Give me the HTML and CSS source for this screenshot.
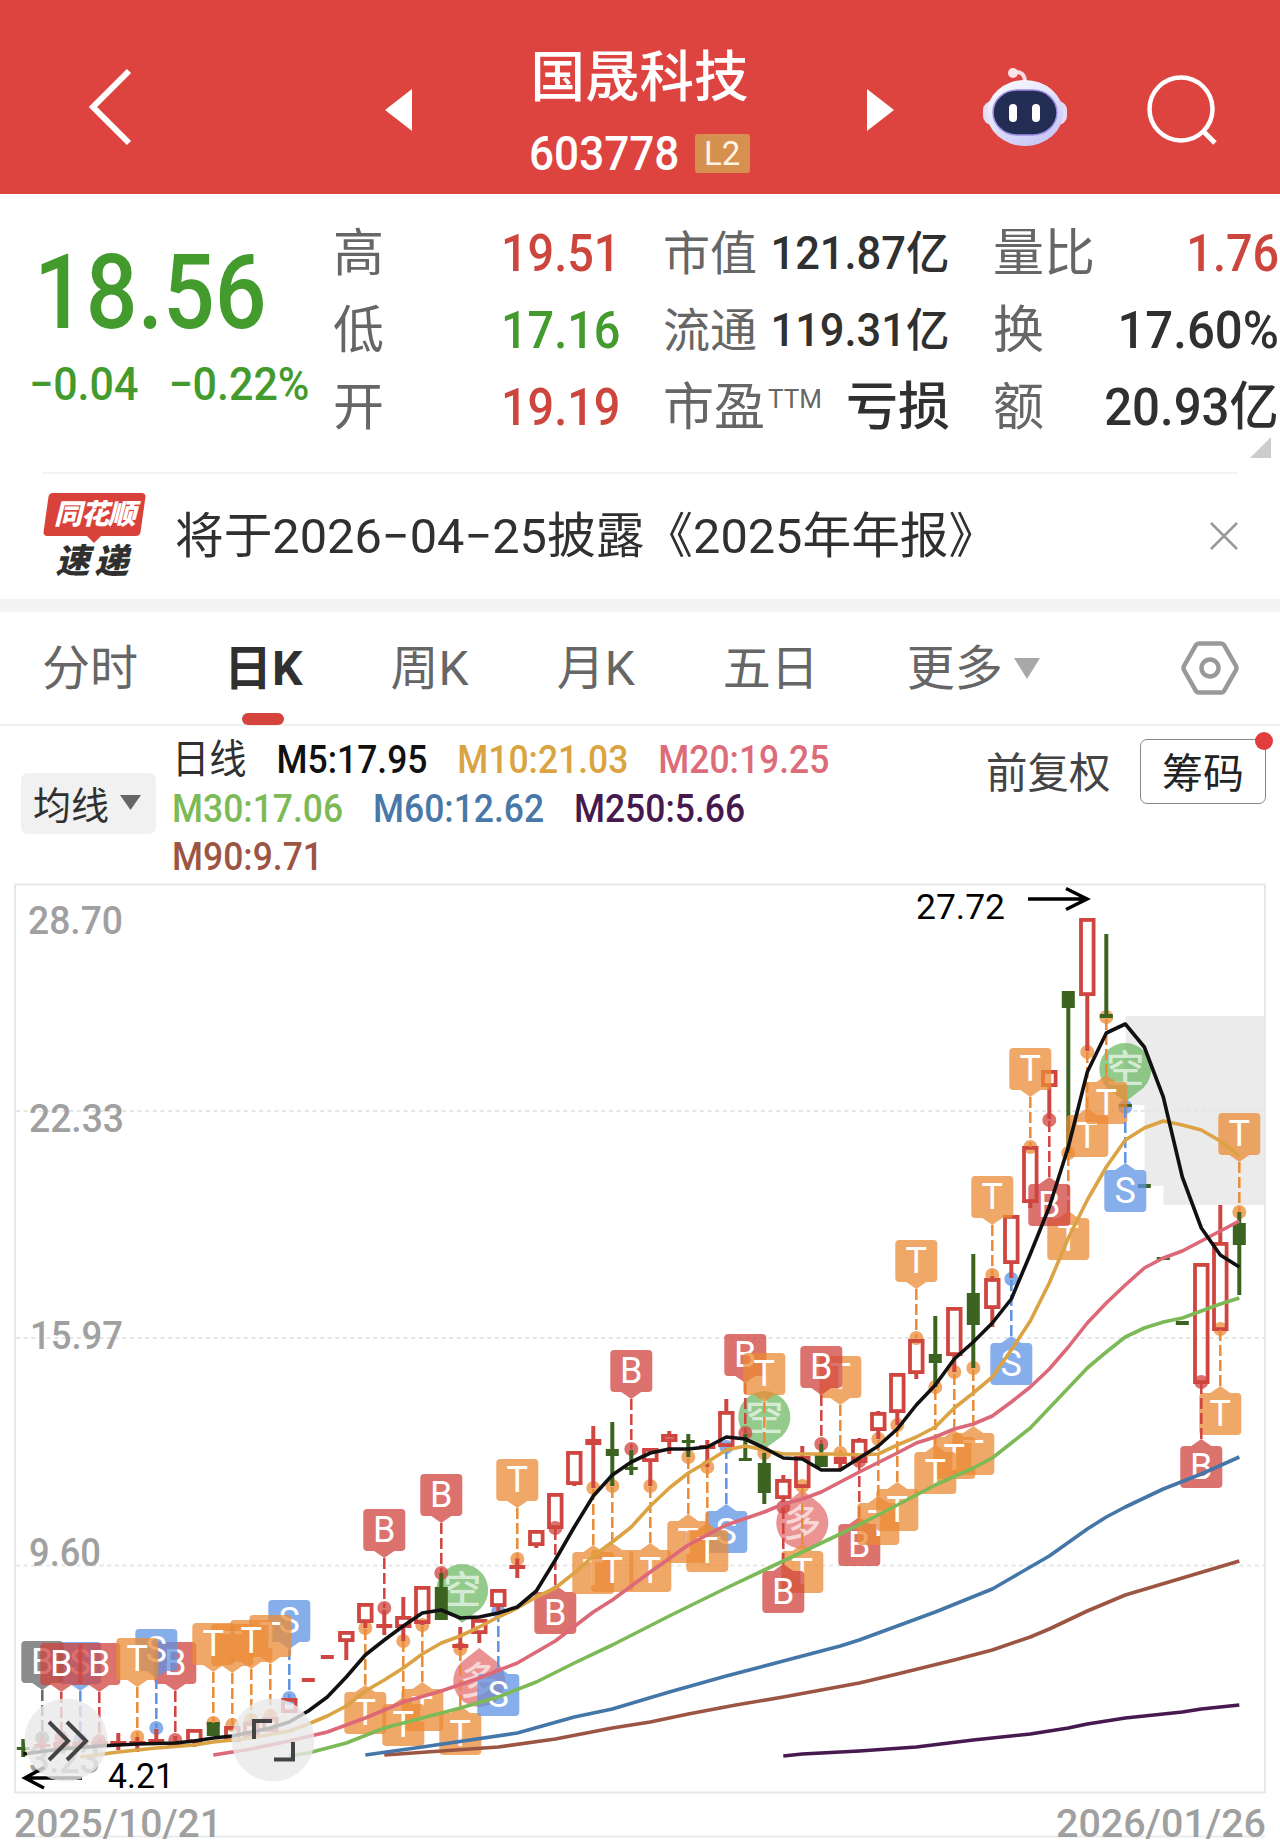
FILE: index.html
```
<!DOCTYPE html>
<html lang="zh-CN">

<head>
    <meta charset="UTF-8" />
    <meta name="viewport" content="width=device-width, initial-scale=1.0" />
    <title>国晟科技 603778</title>
    <link rel="stylesheet" href="styles.css">
</head>

<body>
    <header class="topbar">
        <svg class="back" width="46" height="82" viewBox="0 0 46 82">
            <path d="M42 5 L6 41 L42 77" fill="none" stroke="#fff" stroke-width="6" />
        </svg>
        <svg class="prev" width="27" height="42" viewBox="0 0 27 42">
            <path d="M27 0 V42 L0 21 Z" fill="#fff" />
        </svg>
        <div class="stock">
            <h1>国晟科技</h1>
            <div class="code"><span class="digits">603778</span><span class="level">L2</span></div>
        </div>
        <svg class="next" width="27" height="42" viewBox="0 0 27 42">
            <path d="M0 0 V42 L27 21 Z" fill="#fff" />
        </svg>
        <svg class="robot" width="86" height="82" viewBox="0 0 86 82">
            <defs>
                <linearGradient id="shell" x1="0" y1="0" x2="0.6" y2="1">
                    <stop offset="0" stop-color="#fff" />
                    <stop offset="1" stop-color="#c9c8f6" />
                </linearGradient>
            </defs>
            <path d="M31 7 Q43 5 43 18" fill="none" stroke="#f4d9e6" stroke-width="4" />
            <circle cx="31" cy="8" r="5" fill="#fbe3ea" />
            <rect x="1" y="36" width="84" height="24" rx="9" fill="#e6dcf6" />
            <ellipse cx="43" cy="48" rx="38" ry="33" fill="url(#shell)" />
            <rect x="11" y="25" width="64" height="45" rx="24" fill="#232c53" stroke="#9c8fe6" stroke-width="1.5" />
            <rect x="27" y="39" width="8" height="18" rx="4" fill="#fff" />
            <rect x="50" y="39" width="8" height="18" rx="4" fill="#fff" />
        </svg>
        <svg class="search" width="76" height="76" viewBox="0 0 76 76">
            <circle cx="36" cy="36" r="31.5" fill="none" stroke="#fff" stroke-width="4.5" />
            <path d="M58 58 L70 70" stroke="#fff" stroke-width="5" />
        </svg>
    </header>

    <section class="quote">
        <div class="price down">
            <div class="now">18.56</div>
            <div class="change"><span>−0.04</span><span>−0.22%</span></div>
        </div>
        <div class="col col-a">
            <div><label>高</label><b class="up">19.51</b></div>
            <div><label>低</label><b class="down">17.16</b></div>
            <div><label>开</label><b class="up">19.19</b></div>
        </div>
        <div class="col col-b">
            <div class="tight"><label>市值</label><b>121.87亿</b></div>
            <div class="tight"><label>流通</label><b>119.31亿</b></div>
            <div><label>市盈<small>TTM</small></label><b class="word">亏损</b></div>
        </div>
        <div class="col col-c">
            <div><label>量比</label><b class="up">1.76</b></div>
            <div><label>换</label><b>17.60%</b></div>
            <div><label>额</label><b>20.93亿</b></div>
        </div>
        <i class="corner"></i>
    </section>

    <section class="notice">
        <div class="logo">
            <span class="logo-top">同花顺</span>
            <span class="logo-bottom">速递</span>
        </div>
        <p>将于2026−04−25披露《2025年年报》</p>
        <svg class="close" width="28" height="28" viewBox="0 0 28 28">
            <path d="M1 1 L27 27 M27 1 L1 27" stroke="#999" stroke-width="2.6" />
        </svg>
    </section>

    <nav class="tabs">
        <a>分时</a>
        <a class="active">日K</a>
        <a>周K</a>
        <a>月K</a>
        <a>五日</a>
        <a>更多<svg width="26" height="21" viewBox="0 0 26 21"><path d="M0 0 H26 L13 21 Z" fill="#a8a8a8" /></svg></a>
        <svg class="setting" width="58" height="54" viewBox="0 0 58 54">
            <path d="M18 2.500 H40 Q42 2.500 43 4 L55 25 Q56 27 55 29 L43 50 Q42 51.500 40 51.500 H18 Q16 51.500 15 50 L3 29 Q2 27 3 25 L15 4 Q16 2.500 18 2.500 Z" fill="none" stroke="#999" stroke-width="4.500" />
            <circle cx="29" cy="27" r="8.500" fill="none" stroke="#999" stroke-width="4.500" />
        </svg>
    </nav>

    <section class="average">
        <button class="pick">均线<svg width="21" height="15" viewBox="0 0 21 15"><path d="M0 0 H21 L10.500 15 Z" fill="#666" /></svg></button>
        <div class="lines">
            <div><span class="name">日线</span><span class="m5">M5:17.95</span><span class="m10">M10:21.03</span><span class="m20">M20:19.25</span></div>
            <div><span class="m30">M30:17.06</span><span class="m60">M60:12.62</span><span class="m250">M250:5.66</span></div>
            <div><span class="m90">M90:9.71</span></div>
        </div>
        <span class="adjust">前复权</span>
        <button class="chips">筹码<i></i></button>
    </section>

    <svg id="chart" width="1280" height="967" viewBox="0 880 1280 967"></svg>

    <script src="chart.js"></script>
</body>

</html>
```
FILE: styles.css
```
* {
    box-sizing: border-box;
}

body {
    margin: 0;
    width: 1280px;
    height: 1847px;
    overflow: hidden;
    background: #fff;
    color: #303030;
    font-family: Roboto, "Noto Sans CJK SC", sans-serif;
}

svg {
    display: block;
    flex: none;
}

/* top bar */
.topbar {
    display: flex;
    height: 194px;
    background: #dd433f;
    color: #fff;
}

.back {
    margin: 66px 0 0 87px;
}

.prev {
    margin: 89px 0 0 252px;
}

.stock {
    width: 455px;
    padding-top: 41px;
    text-align: center;
}

.stock h1 {
    margin: 0;
    font-size: 54.500px;
    font-weight: 500;
    line-height: 72px;
}

.code {
    display: flex;
    justify-content: center;
    align-items: center;
    gap: 14px;
    height: 80px;
    font-size: 49px;
    font-weight: 500;
}

/* the digits are narrower than the font draws them */
.digits {
    margin-right: -16px;
    transform: scaleX(.9);
    transform-origin: left;
}

.level {
    width: 55px;
    height: 39px;
    border-radius: 3px;
    background: #d69150;
    color: #fff4e2;
    font-size: 33px;
    font-weight: 400;
    line-height: 40px;
}

.next {
    margin: 89px 0 0;
}

.robot {
    margin: 65px 0 0 88px;
}

.search {
    margin: 73px 0 0 77px;
}

/* quote */
.quote {
    position: relative;
    display: flex;
    height: 280px;
    padding-top: 21px;
}

.quote::after {
    content: "";
    position: absolute;
    left: 42px;
    right: 42px;
    bottom: 0;
    height: 2px;
    background: #f4f4f4;
}

.up {
    color: #cd463e;
}

.down {
    color: #439a2d;
}

.price {
    width: 333px;
}

.now {
    margin: 20px 0 0 34px;
    font-size: 104px;
    font-weight: 500;
    line-height: 116px;
    transform: scaleX(.877);
    transform-origin: left;
}

.change {
    display: flex;
    gap: 32px;
    padding-left: 31px;
    font-size: 46px;
    font-weight: 500;
    line-height: 66px;
    white-space: nowrap;
    transform: scaleX(.935);
    transform-origin: left;
}

.col div {
    display: flex;
    align-items: center;
    justify-content: space-between;
    height: 77px;
    white-space: nowrap;
}

.col label {
    color: #666;
    font-size: 51px;
    line-height: 77px;
}

.col b {
    font-size: 52px;
    font-weight: 500;
    line-height: 77px;
    transform: scaleX(.945);
    transform-origin: right;
}

.col-a {
    width: 330px;
}

.col-a label {
    width: 168px;
}

.col-a div {
    justify-content: flex-start;
}

.col-a b {
    transform: scaleX(.9);
    transform-origin: left;
}

.col-b {
    width: 287px;
}

.col-b .tight label {
    font-size: 47px;
}

.col-b .tight b {
    font-size: 46px;
}

.col-b .word {
    transform: none;
}

.col-b small {
    padding-left: 3px;
    font-size: 26px;
    vertical-align: 17px;
    line-height: 1;
}

.col-c {
    width: 286px;
    margin-left: 43px;
}

.col-c .up {
    transform: scaleX(.9);
}

.corner {
    position: absolute;
    right: 9px;
    top: 243px;
    border-left: 21px solid transparent;
    border-bottom: 21px solid #ccc;
}

/* notice */
.notice {
    display: flex;
    height: 138px;
    border-bottom: 13px solid #f4f4f4;
}

.logo {
    width: 103px;
    margin: 19px 0 0 43px;
    text-align: center;
}

.logo-top {
    display: block;
    position: relative;
    height: 43px;
    font-size: 28px;
    font-weight: 900;
    line-height: 43px;
    color: #fff;
    z-index: 0;
    font-style: italic;
    letter-spacing: -1px;
}

.logo-top::before {
    content: "";
    position: absolute;
    inset: 0 3px;
    border-radius: 4px;
    background: #d8423b;
    transform: skewX(-8deg);
    z-index: -1;
}

.logo-top::after {
    content: "";
    position: absolute;
    left: 44px;
    top: 43px;
    border: 7px solid transparent;
    border-top-color: #d8423b;
}

.logo-bottom {
    display: block;
    margin: 7px 0 0 0;
    font-size: 34px;
    font-weight: 900;
    font-style: italic;
    line-height: 36px;
    letter-spacing: 5px;
}

.notice p {
    width: 1064px;
    margin: 0;
    padding-left: 29px;
    font-size: 48.700px;
    line-height: 126px;
    white-space: nowrap;
}

.close {
    margin: 48px 0 0;
}

/* tabs */
.tabs {
    position: relative;
    display: flex;
    height: 114px;
    border-bottom: 2px solid #efefef;
    color: #666;
    font-size: 48px;
    line-height: 116px;
}

.tabs a {
    position: relative;
    display: flex;
    align-items: center;
    height: 113px;
    white-space: nowrap;
    margin-left: 88px;
}

.tabs a:first-child {
    margin-left: 42px;
}

.tabs a svg {
    margin-left: 11px;
}

.tabs .active {
    margin-left: 86px;
    color: #303030;
    font-weight: 700;
}

.tabs .active::after {
    content: "";
    position: absolute;
    left: 18px;
    bottom: 0;
    width: 42px;
    height: 12px;
    border-radius: 6px;
    background: #d4443c;
}

.setting {
    margin: 29px 41px 0 auto;
}

/* moving averages */
.average {
    display: flex;
    height: 154px;
}

.pick {
    display: flex;
    align-items: center;
    justify-content: center;
    gap: 11px;
    width: 135px;
    height: 61px;
    margin: 47px 0 0 21px;
    padding: 0 3px 3px 0;
    border: none;
    border-radius: 7px;
    background: #f1f1f1;
    color: #303030;
    font: 400 38px Roboto, "Noto Sans CJK SC", sans-serif;
}

.lines {
    width: 831px;
    padding: 10px 0 0 16px;
    font-size: 38px;
    font-weight: 500;
    white-space: nowrap;
}

.lines div {
    display: flex;
    gap: 32px;
    height: 48.500px;
    line-height: 48.500px;
    transform: scaleX(.933);
    transform-origin: left;
}

.name {
    font-size: 40px;
    font-weight: 400;
}

.m5 {
    color: #111;
}

.m10 {
    color: #d9a441;
}

.m20 {
    color: #dc6c79;
}

.m30 {
    color: #7dba57;
}

.m60 {
    color: #4878a8;
}

.m250 {
    color: #46194f;
}

.m90 {
    color: #9c5543;
}

.adjust {
    width: 154px;
    margin-left: -1px;
    font-size: 41.500px;
    line-height: 96px;
    color: #444;
}

.chips {
    position: relative;
    width: 126px;
    height: 65px;
    margin-top: 13px;
    padding: 0 0 3px;
    border: 1.500px solid #888;
    border-radius: 7px;
    background: #fff;
    color: #222;
    font: 400 41px Roboto, "Noto Sans CJK SC", sans-serif;
}

.chips i {
    position: absolute;
    right: -8px;
    top: -8px;
    width: 18px;
    height: 18px;
    border-radius: 50%;
    background: #e23c3c;
}

/* chart */
#chart text {
    font-family: Roboto, "Noto Sans CJK SC", sans-serif;
}

#chart .axis {
    fill: #a0a0a0;
    font-size: 39px;
    font-weight: 500;
}

#chart .extreme {
    fill: #000;
    font-size: 35px;
}

#chart .letter {
    fill: #fff;
    font-size: 36px;
    text-anchor: middle;
}

#chart .pin {
    fill: #fff;
    fill-opacity: .65;
    font-size: 38px;
    font-weight: 500;
    text-anchor: middle;
}
```
FILE: chart.js
```
const RED = "#cf4640";
const GREEN = "#3c6420";
const TAG = { B: "#d0433e", T: "#eb8b36", S: "#5e93e3", G: "#666666" };

const x = i => 23.3 + 19 * i;

// index, colour, high, body top, body bottom, low
const candles = [
    [0, "g", 1739, 1747, 1750, 1757], [1, "r", 1738, 1744, 1747, 1750], [2, "r", 1739, 1742, 1748, 1750],
    [3, "r", 1738, 1742, 1746, 1749], [4, "r", 1738, 1741, 1745, 1748], [5, "r", 1733, 1741, 1744, 1750],
    [6, "r", 1737, 1741, 1745, 1752], [7, "r", 1729, 1739, 1743, 1745], [8, "r", 1736, 1744, 1747, 1748],
    [9, "r", 1729, 1729, 1743, 1747], [10, "g", 1722, 1722, 1736, 1736], [11, "r", 1726, 1726, 1742, 1742],
    [12, "r", 1720, 1722, 1737, 1737], [13, "r", 1717, 1717, 1732, 1732], [14, "r", 1698, 1698, 1713, 1713],
    [15, "r", 1678, 1678, 1682, 1682], [16, "r", 1655, 1655, 1659, 1659], [17, "r", 1631, 1631, 1642, 1660],
    [18, "r", 1603, 1603, 1623, 1628], [19, "r", 1610, 1624, 1628, 1635], [20, "r", 1597, 1616, 1628, 1641],
    [21, "r", 1586, 1586, 1624, 1625], [22, "g", 1573, 1587, 1620, 1620], [23, "r", 1627, 1644, 1648, 1650],
    [24, "r", 1619, 1619, 1634, 1643], [25, "r", 1589, 1589, 1607, 1611], [26, "r", 1558, 1565, 1569, 1578],
    [27, "r", 1530, 1530, 1546, 1548], [28, "r", 1493, 1493, 1529, 1529], [29, "r", 1451, 1451, 1485, 1486],
    [30, "r", 1426, 1439, 1445, 1488], [31, "g", 1422, 1449, 1456, 1486], [32, "g", 1450, 1467, 1470, 1475],
    [33, "r", 1448, 1448, 1462, 1486], [34, "r", 1431, 1434, 1442, 1454], [35, "g", 1434, 1440, 1443, 1457],
    [36, "r", 1440, 1445, 1449, 1467], [37, "r", 1399, 1411, 1447, 1447], [38, "g", 1434, 1458, 1461, 1461],
    [39, "g", 1453, 1463, 1493, 1504], [40, "r", 1475, 1479, 1499, 1506], [41, "r", 1446, 1456, 1488, 1488],
    [42, "g", 1444, 1453, 1467, 1467], [43, "r", 1457, 1457, 1464, 1469], [44, "r", 1438, 1439, 1463, 1463],
    [45, "r", 1411, 1412, 1431, 1439], [46, "r", 1373, 1373, 1413, 1425], [47, "r", 1339, 1339, 1374, 1379],
    [48, "g", 1316, 1354, 1363, 1387], [49, "r", 1307, 1307, 1356, 1372], [50, "g", 1254, 1293, 1325, 1368],
    [51, "r", 1276, 1278, 1309, 1327], [52, "r", 1215, 1215, 1264, 1278], [53, "r", 1146, 1146, 1203, 1208],
    [54, "r", 1070, 1070, 1087, 1119], [55, "g", 991, 991, 1008, 1153], [56, "r", 918, 918, 996, 1051],
    [57, "g", 934, 1014, 1018, 1018], [58, "g", 1104, 1104, 1107, 1107], [59, "g", 1184, 1184, 1188, 1188],
    [60, "g", 1257, 1257, 1260, 1260], [61, "g", 1321, 1321, 1325, 1325], [62, "r", 1263, 1263, 1384, 1384],
    [63, "r", 1205, 1242, 1331, 1331], [64, "g", 1212, 1223, 1245, 1295]
];

// index, letter, box top, dot y -- later ones lie on top
const tags = [
    [3, "S", 1642, 1740], [1, "G", 1641, 1738], [4, "B", 1643, 1741], [2, "B", 1643, 1738],
    [8, "B", 1642, 1740], [7, "S", 1629, 1728], [6, "T", 1638, 1737],
    [14, "S", 1600, 1698], [13, "T", 1615, 1716], [11, "T", 1624, 1725], [12, "T", 1620, 1720], [10, "T", 1623, 1723],
    [18, "T", 1692, 1628], [19, "B", 1509, 1608], [21, "T", 1689, 1625], [20, "T", 1704, 1641],
    [22, "B", 1474, 1573], [23, "T", 1713, 1649], [25, "S", 1674, 1611], [26, "T", 1459, 1559],
    [28, "B", 1592, 1528], [30, "T", 1552, 1488], [33, "T", 1550, 1486], [31, "T", 1550, 1486],
    [32, "B", 1350, 1449], [37, "S", 1511, 1447], [35, "T", 1521, 1457], [36, "T", 1530, 1467],
    [38, "B", 1334, 1433], [39, "T", 1353, 1453], [41, "T", 1551, 1486], [40, "B", 1571, 1507],
    [43, "T", 1356, 1453], [42, "B", 1346, 1444], [44, "B", 1524, 1461], [45, "T", 1503, 1439],
    [46, "T", 1489, 1425], [50, "T", 1433, 1368], [49, "T", 1437, 1372], [48, "T", 1452, 1387],
    [47, "T", 1240, 1338], [51, "T", 1176, 1275], [52, "S", 1343, 1279], [53, "T", 1048, 1147],
    [55, "T", 1218, 1153], [54, "B", 1184, 1120], [56, "T", 1115, 1052], [57, "T", 1082, 1017],
    [58, "S", 1170, 1107], [63, "T", 1393, 1329], [62, "B", 1446, 1382], [64, "T", 1113, 1212]
];

// long / short signals: index, text, centre y, tip y
const pins = [
    [23.1, "空", 1590, 1623], [39, "空", 1417, 1449], [58, "空", 1069, 1102],
    [24, "多", 1681, 1648], [41, "多", 1523, 1490]
];

// moving averages: colour, then index / y pairs
const averages = [
    ["#46194f", [40, 1756, 41, 1754, 44, 1751, 47, 1747, 50, 1740, 53, 1734, 55, 1728, 56, 1724, 58, 1718, 61, 1712, 62, 1709, 64, 1705]],
    ["#9c5543", [19, 1755, 25, 1747, 28, 1739, 31, 1728, 33, 1722, 35, 1714, 37.5, 1705, 40, 1697, 42, 1690, 44, 1683, 46, 1674, 49, 1660, 51, 1650, 53, 1637, 54, 1629, 56, 1611, 58, 1595, 61, 1578, 64, 1561]],
    ["#4477a8", [18, 1755, 21, 1747, 26, 1733, 29, 1717, 31, 1709, 34, 1692, 37, 1676, 40, 1661, 43, 1646, 44, 1640, 46, 1626, 48, 1612, 51, 1589, 52, 1578, 54, 1556, 56, 1529, 57, 1517, 58, 1507, 60, 1489, 62, 1474, 64, 1457]],
    ["#7dba57", [14, 1756, 15, 1753, 17, 1743, 19, 1728, 21, 1718, 23, 1708, 25, 1697, 27, 1682, 29, 1663, 31, 1645, 34, 1616, 37, 1588, 39, 1570, 41, 1552, 43, 1534, 45, 1515, 47, 1495, 48, 1485, 50, 1468, 51, 1458, 52, 1443, 53, 1428, 54, 1408, 55, 1388, 56, 1368, 57, 1352, 58, 1337, 59, 1328, 60, 1322, 61, 1318, 62, 1311, 63, 1304, 64, 1298]],
    ["#dc6878", [10, 1755, 12, 1749, 14, 1741, 16, 1732, 18, 1718, 20, 1702, 22, 1691, 24, 1678, 26, 1663, 28, 1641, 30, 1612, 31, 1600, 33, 1572, 35, 1545, 37, 1525, 39, 1512, 40, 1504, 41, 1499, 42, 1492, 44, 1472, 46, 1453, 47, 1443, 48, 1437, 49, 1429, 50, 1424, 51, 1416, 52, 1402, 53, 1387, 54, 1369, 55, 1347, 56, 1323, 57, 1303, 58, 1285, 59, 1268, 60, 1258, 61, 1251, 62, 1241, 63, 1231, 64, 1221]],
    ["#dba343", [3, 1757, 5, 1752, 7, 1748, 9, 1745, 10, 1742, 12, 1738, 14, 1731, 15, 1724, 16, 1716, 17, 1706, 18, 1691, 19, 1680, 20, 1668, 21, 1654, 22, 1643, 23, 1636, 24, 1627, 25, 1617, 26, 1608, 27, 1597, 28, 1588, 29, 1573, 30, 1556, 31, 1542, 32, 1527, 33, 1506, 34, 1488, 35, 1473, 36, 1462, 37, 1450, 38, 1446, 39, 1450, 40, 1454, 43, 1454, 44, 1455, 45, 1454, 46, 1445, 47, 1437, 48, 1427, 49, 1408, 50, 1393, 51, 1377, 52, 1350, 53, 1321, 54, 1283, 55, 1238, 56, 1200, 57, 1167, 58, 1140, 59, 1128, 60, 1121, 61, 1125, 62, 1130, 63, 1141, 64, 1156]],
    ["#111", [0, 1754, 2, 1749, 4, 1746, 6, 1744, 8, 1743, 9, 1741, 10, 1738, 11, 1736, 12, 1732, 13, 1728, 14, 1722, 15, 1711, 16, 1697, 17, 1677, 18, 1655, 19, 1640, 20, 1626, 21, 1613, 22, 1610, 23, 1618, 24, 1617, 25, 1613, 26, 1607, 27, 1591, 28, 1560, 29, 1527, 30, 1496, 31, 1475, 32, 1462, 33, 1453, 34, 1449, 35, 1449, 36, 1447, 37, 1437, 38, 1439, 39, 1448, 40, 1458, 41, 1459, 42, 1470, 43, 1470, 44, 1458, 45, 1446, 46, 1429, 47, 1405, 48, 1385, 49, 1359, 50, 1342, 51, 1323, 52, 1299, 53, 1254, 54, 1207, 55, 1147, 56, 1072, 57, 1033, 58, 1024, 59, 1047, 60, 1097, 61, 1177, 62, 1228, 63, 1255, 64, 1267]]
];

let out = "";

// gap area
out += '<path d="M1125.7 1016 H1265 V1205 H1163.500 V1186 H1144.500 V1105 H1125.700 Z" fill="#ebebeb" />';

// frame and grid
out += '<rect x="15" y="884.5" width="1250" height="908" fill="none" stroke="#e8e8e8" stroke-width="2" />';
out += '<path d="M15 1836.500 H1265" stroke="#ececec" stroke-width="2" />';
for (const y of [1111, 1338, 1565.5]) {
    out += `<path d="M16 ${y} H1264" stroke="#e6e6e6" stroke-width="2" stroke-dasharray="4 3.6" />`;
}

// axis labels: text, x, baseline, width
for (const [text, tx, ty, w] of [["28.70", 28, 934, 95], ["22.33", 29, 1132, 95], ["15.97", 30, 1349, 93], ["9.60", 29, 1566, 72], ["3.23", 29, 1773, 71], ["2025/10/21", 14, 1837, 208], ["2026/01/26", 1056, 1837, 210]]) {
    out += `<text class="axis" x="${tx}" y="${ty}" textLength="${w}" lengthAdjust="spacingAndGlyphs">${text}</text>`;
}

function candle([i, c, high, top, bottom, low]) {
    const color = c === "r" ? RED : GREEN;
    const cx = x(i);
    let s = "";
    if (top > high) s += `<path d="M${cx} ${high} V${top}" stroke="${color}" stroke-width="4" />`;
    if (low > bottom) s += `<path d="M${cx} ${bottom} V${low}" stroke="${color}" stroke-width="4" />`;
    if (c === "r" && bottom - top > 7) {
        s += `<rect x="${cx - 6.3}" y="${top + 1.9}" width="12.6" height="${bottom - top - 3.8}" fill="none" stroke="${color}" stroke-width="3.8" />`;
    } else {
        const w = c === "r" && high < top ? 16 : 13;
        s += `<rect x="${cx - w / 2}" y="${top}" width="${w}" height="${bottom - top}" fill="${color}" />`;
    }
    return s;
}

function pin([i, text, cy, tip]) {
    const cx = x(i);
    const color = text === "空" ? "#5fb255" : "#e0605f";
    const edge = cy + (tip > cy ? 22 : -22);
    return `<g fill="${color}" fill-opacity=".68"><path d="M${cx - 14} ${edge} A26 26 0 1 ${tip > cy ? 1 : 0} ${cx + 14} ${edge} L${cx} ${tip} Z" /></g>
        <text class="pin" x="${cx}" y="${cy + 13}">${text}</text>`;
}

function tag([i, type, top, dot]) {
    const cx = x(i), color = TAG[type];
    const above = top < dot;
    const l = cx - 21, r = cx + 21, b = top + 42;
    const tip = above ? b + 7 : top - 7;
    const arrow = above
        ? `H${cx + 10} L${cx} ${tip} L${cx - 10} ${b} H${l + 4}`
        : `H${l + 4}`;
    const head = above ? "" : `H${cx - 10} L${cx} ${tip} L${cx + 10} ${top}`;
    return `<path d="M${cx} ${tip} V${dot}" stroke="${color}" stroke-width="2.5" stroke-dasharray="11 4" />
        <path d="M${l + 4} ${top} ${head} H${r - 4} Q${r} ${top} ${r} ${top + 4} V${b - 4} Q${r} ${b} ${r - 4} ${b} ${arrow} Q${l} ${b} ${l} ${b - 4} V${top + 4} Q${l} ${top} ${l + 4} ${top} Z" fill="${color}" fill-opacity=".75" />
        <text class="letter" x="${cx}" y="${top + 33}">${type === "G" ? "B" : type}</text>`;
}

out += pins.map(pin).join("");
for (const [i, type, , dot] of tags) {
    out += `<circle cx="${x(i)}" cy="${dot}" r="7" fill="${TAG[type]}" fill-opacity=".75" />`;
}
out += candles.map(candle).join("");
out += tags.map(tag).join("");

for (const [color, data] of averages) {
    let points = "";
    for (let k = 0; k < data.length; k += 2) points += `${x(data[k])},${data[k + 1]} `;
    out += `<polyline points="${points}" fill="none" stroke="${color}" stroke-width="3.6" stroke-linejoin="round" />`;
}

// highest and lowest price
out += `<text class="extreme" x="916" y="919" textLength="89" lengthAdjust="spacingAndGlyphs">27.72</text>
    <path d="M1028 899 H1087 M1066 888.500 L1087 899 L1066 909.500" fill="none" stroke="#000" stroke-width="3.500" />
    <text class="extreme" x="108" y="1788" textLength="66" lengthAdjust="spacingAndGlyphs">4.21</text>
    <path d="M82 1778 H25 M44 1767.500 L25 1778 L44 1788" fill="none" stroke="#000" stroke-width="3.500" />`;

// floating buttons
out += `<circle cx="66" cy="1740" r="41.500" fill="#e9e9e9" fill-opacity=".8" />
    <circle cx="273" cy="1740" r="41.500" fill="#e9e9e9" fill-opacity=".8" />
    <g fill="none" stroke="#444" stroke-width="4">
        <path d="M49 1722 L68 1741 L49 1760 M67 1722 L86 1741 L67 1760" />
        <path d="M254 1739 V1721 H272 M293 1742 V1759.500 H274" />
    </g>`;

document.getElementById("chart").innerHTML = out;
```
